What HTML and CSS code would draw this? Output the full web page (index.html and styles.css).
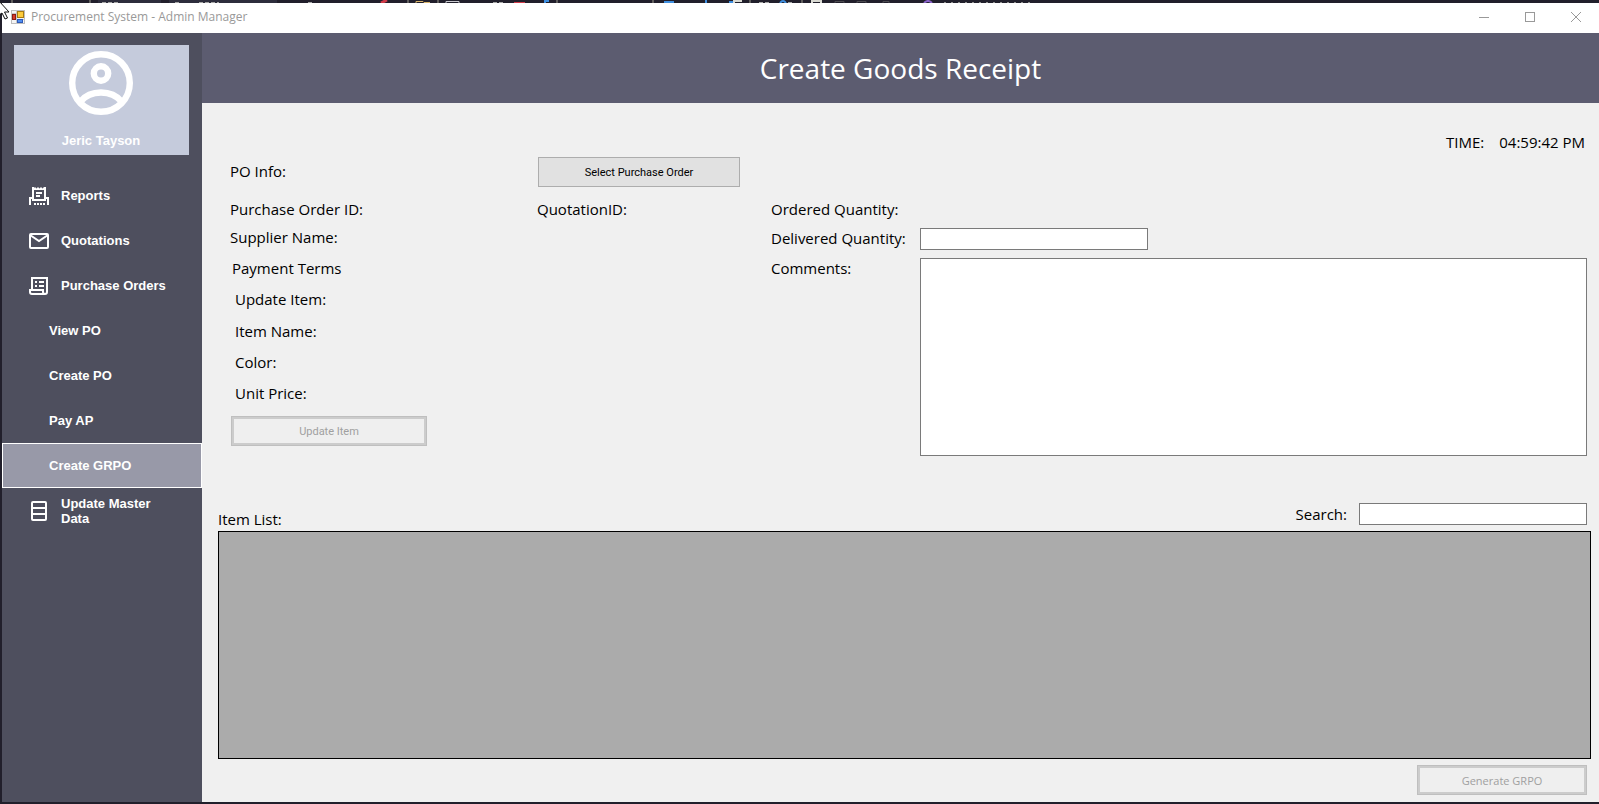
FILE: index.html
```
<!DOCTYPE html>
<html lang="en">
<head>
<meta charset="utf-8">
<title>Procurement System - Admin Manager</title>
<link rel="stylesheet" href="styles.css">
</head>
<body>
<div class="desktop">
  <svg class="backdrop-top" width="1599" height="3" viewBox="0 0 1599 3" aria-hidden="true">
    <path d="M98 0h63v3H98zM169 0h108v3H169z" fill="#2d2d3c"/>
    <path d="M12 0v3M90 0v3M408 0v3M438 0v3M557 0v3M653 0v3M750 0v3M802 0v3" stroke="#5f5d5c" stroke-width="2"/>
    <path d="M102 2.500h16M175 2.500h4M199 2.500h20M308 2.500h4M493 2.500h10M759 2.500h12M788 2.500h6" stroke="#a5a5a5" stroke-dasharray="4 2"/>
    <path d="M381 3l6-3" stroke="#d03a48" stroke-width="3"/>
    <path d="M514 2.500h11" stroke="#d03a48"/>
    <path d="M416 3V1.500h7l1 1h6" stroke="#d8b36a" fill="none"/>
    <path d="M446 3V1.500h13V3" stroke="#c9c9cf" fill="none"/>
    <path d="M734 3V1h8M812 3V1h9v2" stroke="#d9d9d2" stroke-width="2" fill="none"/>
    <path d="M835 3V1.500h9V3M857 3V1.500h9V3M883 3V1.500h6V3" stroke="#4c4b50" fill="none"/>
    <path d="M545 3V1h4M664 2h10M706 0v3M729 2h4M780 3q3-4 6 0" stroke="#3f8fe0" stroke-width="2" fill="none"/>
    <path d="M924 3q4-4 8 0" stroke="#8a63c9" stroke-width="2" fill="none"/>
    <path d="M944 2.500h90" stroke="#8f8f8f" stroke-dasharray="2 5"/>
  </svg>
  <div class="window">
    <header class="titlebar">
      <svg class="app-icon" width="14" height="14" viewBox="0 0 14 14" aria-hidden="true">
        <rect x="0.5" y="0.5" width="13" height="13" fill="#f4f4f4" stroke="#bdbdbd"/>
        <path d="M5.500 0v14M0 9.500h14M0 3.500h6" stroke="#c6c6c6"/>
        <rect x="6.500" y="1.500" width="6" height="6" fill="#fccb3c" stroke="#a87a10"/>
        <rect x="1.500" y="4.500" width="3" height="5" fill="#d93b2b" stroke="#8c1c14"/>
        <rect x="6.500" y="9.500" width="5" height="3" fill="#4f8df0" stroke="#2d59b8"/>
      </svg>
      <span class="window-title">Procurement System - Admin Manager</span>
      <div class="window-controls">
        <button type="button" aria-label="Minimize"><svg width="10" height="10" viewBox="0 0 10 10"><path d="M0 5.500h10"/></svg></button>
        <button type="button" aria-label="Maximize"><svg width="10" height="10" viewBox="0 0 10 10"><rect x="0.500" y="0.500" width="9" height="9"/></svg></button>
        <button type="button" aria-label="Close"><svg width="10" height="10" viewBox="0 0 10 10"><path d="M0 0l10 10M10 0L0 10"/></svg></button>
      </div>
    </header>
    <div class="body">
      <aside class="sidebar">
        <button type="button" class="profile">
          <svg width="64" height="64" viewBox="0 0 64 64" fill="none" stroke="#fff" stroke-width="6.400" aria-hidden="true">
            <circle cx="32" cy="32" r="28.800"/>
            <circle cx="32" cy="22.500" r="7.200"/>
            <path d="M11.500 50.500Q19 41.500 32 41.500T52.500 50.500"/>
          </svg>
          <span>Jeric Tayson</span>
        </button>
        <nav class="menu">
          <button type="button" class="item">
            <svg width="20" height="20" viewBox="0 0 20 20" aria-hidden="true">
              <path d="M4 1v13h12V1M4 12H1v7M16 12h3v7" fill="none" stroke="#fff" stroke-width="2"/>
              <path d="M3 1l1.500 1.500L6 1l1.500 1.500L9 1l1.500 1.500L12 1l1.500 1.500L15 1l2 1.500V4H3z" fill="#fff"/>
              <path d="M5 17h2v2H5zM8 17h2v2H8zM11 17h2v2h-2zM14 17h2v2h-2z" fill="#fff"/>
              <path d="M7 7h6M7 10h4" stroke="#fff" stroke-width="2"/>
            </svg>
            <span>Reports</span>
          </button>
          <button type="button" class="item">
            <svg width="20" height="20" viewBox="0 0 20 20" fill="none" stroke="#fff" stroke-width="2" aria-hidden="true">
              <rect x="1" y="3" width="18" height="14" rx="1"/><path d="M1 4l9 6 9-6"/>
            </svg>
            <span>Quotations</span>
          </button>
          <button type="button" class="item">
            <svg width="20" height="20" viewBox="0 0 20 20" fill="none" stroke="#fff" stroke-width="2" aria-hidden="true">
              <path d="M3 13V2h15v14q0 2-2 2H3q-2 0-2-2v-2h13v2q0 2 2 2"/>
              <path d="M6 6h2M6 10h2M10 6h5M10 10h5"/>
            </svg>
            <span>Purchase Orders</span>
          </button>
          <button type="button" class="item sub"><span>View PO</span></button>
          <button type="button" class="item sub"><span>Create PO</span></button>
          <button type="button" class="item sub"><span>Pay AP</span></button>
          <button type="button" class="item sub active" aria-current="page"><span>Create GRPO</span></button>
          <button type="button" class="item">
            <svg width="20" height="20" viewBox="0 0 20 20" fill="none" stroke="#fff" stroke-width="2" aria-hidden="true">
              <rect x="3" y="1" width="14" height="18" rx="1"/><path d="M3 7h14M3 13h14"/>
            </svg>
            <span>Update Master<br>Data</span>
          </button>
        </nav>
      </aside>
      <main class="main">
        <div class="banner"><h1>Create Goods Receipt</h1></div>
        <div class="clock"><span>TIME:</span><time>04:59:42 PM</time></div>
        <section class="form">
          <span class="po-label">PO Info:</span>
          <button type="button" class="btn select">Select Purchase Order</button>
          <div class="details">
            <span>Purchase Order ID:</span>
            <span>Supplier Name:</span>
            <span class="inset">Payment Terms</span>
            <span class="deep">Update Item:</span>
            <span class="deep wide">Item Name:</span>
            <span class="deep">Color:</span>
            <span class="deep">Unit Price:</span>
            <button type="button" class="btn off update" disabled>Update Item</button>
          </div>
          <span class="quotation">QuotationID:</span>
          <div class="delivery">
            <span>Ordered Quantity:</span><span></span>
            <label for="delivered">Delivered Quantity:</label>
            <input id="delivered" class="field" type="text">
            <label for="comments">Comments:</label>
            <textarea id="comments" class="comments"></textarea>
          </div>
        </section>
        <section class="list">
          <div class="list-head">
            <h2>Item List:</h2>
            <div class="search"><label for="search">Search:</label><input id="search" class="field" type="text"></div>
          </div>
          <div class="data-grid" role="region" aria-label="Item List"></div>
          <button type="button" class="btn off generate" disabled>Generate GRPO</button>
        </section>
      </main>
    </div>
  </div>
  <svg class="cursor" width="12" height="20" viewBox="0 0 12 20" aria-hidden="true">
    <path d="M-1 1l10 11H4.500l3 6-2.500 1-3-6-3 2z" fill="#fff" stroke="#111"/>
  </svg>
</div>
</body>
</html>
```
FILE: styles.css
```
* { box-sizing: border-box; }
body { margin: 0; font: 15px/21px "Open Sans", "Noto Sans", sans-serif; color: #000; }
button, input, textarea { font: inherit; margin: 0; }
h1, h2 { margin: 0; font: inherit; }

.desktop { position: relative; display: flex; min-height: 100vh; padding: 3px 0 2px 2px; background: #211f2b; overflow: hidden; }
.backdrop-top { position: absolute; top: 0; left: 0; }
.cursor { position: absolute; top: 0; left: 0; }
.window { flex: 1; display: flex; flex-direction: column; background: #f0f0f0; }

.titlebar { display: flex; align-items: center; height: 30px; padding-left: 9px; background: #fff; color: #999; font-size: 12px; line-height: 16px; }
.app-icon { margin-bottom: 2px; }
.window-title { margin-left: 6px; padding-bottom: 2px; }
.window-controls { display: flex; margin-left: auto; }
.window-controls button { display: flex; align-items: center; justify-content: center; width: 46px; height: 30px; padding: 0 0 2px; border: 0; background: none; }
.window-controls svg { fill: none; stroke: #999; }

.body { flex: 1; display: flex; }
.sidebar { width: 200px; padding: 12px 0; background: #4e4f5e; }
.profile { display: flex; flex-direction: column; align-items: center; justify-content: space-between; width: 175px; height: 110px; margin: 0 12px 18px; padding: 6px 1px 7px 0; border: 0; background: #c5cbdc; }
.profile, .item { color: #fff; font: bold 13px/15px "Liberation Sans", Arial, sans-serif; }
.menu { display: flex; flex-direction: column; }
.item { display: flex; align-items: center; gap: 12px; height: 45px; padding: 0 26px; border: 1px solid transparent; background: none; text-align: left; }
.item.sub { padding-left: 46px; }
.item.active { background: #9899a8; border-color: #fff; }

.main { flex: 1; display: flex; flex-direction: column; min-width: 0; }
.banner { display: flex; align-items: center; justify-content: center; height: 70px; background: #5c5c70; color: #fff; font-size: 28px; line-height: 36px; }
.clock { display: flex; justify-content: flex-end; gap: 15px; padding: 29px 14px 4px 0; }

.form { display: grid; grid-template-columns: 307px 234px 1fr; grid-template-rows: 30px auto; row-gap: 12px; padding: 0 12px 0 28px; }
.po-label { align-self: center; padding-bottom: 2px; }
.btn { width: 202px; height: 30px; padding: 0; border: 1px solid #adadad; background: #e1e1e1; color: #000; font-size: 11px; }
.btn.off { border: 1px solid #bfbfbf; box-shadow: inset 0 0 0 2px #cccccc; background: #efefef; color: #a0a0a0; }
.select, .btn.update { margin-left: 1px; font-family: Roboto, "Open Sans", sans-serif; }
.details { grid-column: 1; display: flex; flex-direction: column; align-items: flex-start; }
.details span { margin-bottom: 10px; }
.details span:first-child { margin-bottom: 7px; }
.details .inset { margin-left: 2px; }
.details .deep { margin-left: 5px; }
.details .wide { margin-top: 1px; }
.details .update { width: 196px; margin-top: 2px; }
.delivery { display: grid; grid-template-columns: 149px 1fr; grid-template-rows: 21px 22px 198px; row-gap: 8px; padding-bottom: 1px; }
.field { width: 228px; height: 22px; padding: 0 4px; border: 1px solid #7a7a7a; background: #fff; }
.comments { width: 100%; height: 198px; padding: 4px; border: 1px solid #7a7a7a; resize: none; display: block; background: #fff; }

.list { flex: 1; display: flex; flex-direction: column; padding: 46px 8px 7px 16px; }
.list-head { display: flex; justify-content: space-between; align-items: flex-end; height: 28px; padding-right: 4px; }
.list-head h2 { padding-bottom: 1px; }
.search { display: flex; align-items: center; gap: 12px; padding-bottom: 6px; }
.data-grid { flex: 1; border: 1px solid #000; background: #ababab; }
.generate { align-self: flex-end; width: 170px; height: 30px; margin: 6px 4px 0 0; }
```
